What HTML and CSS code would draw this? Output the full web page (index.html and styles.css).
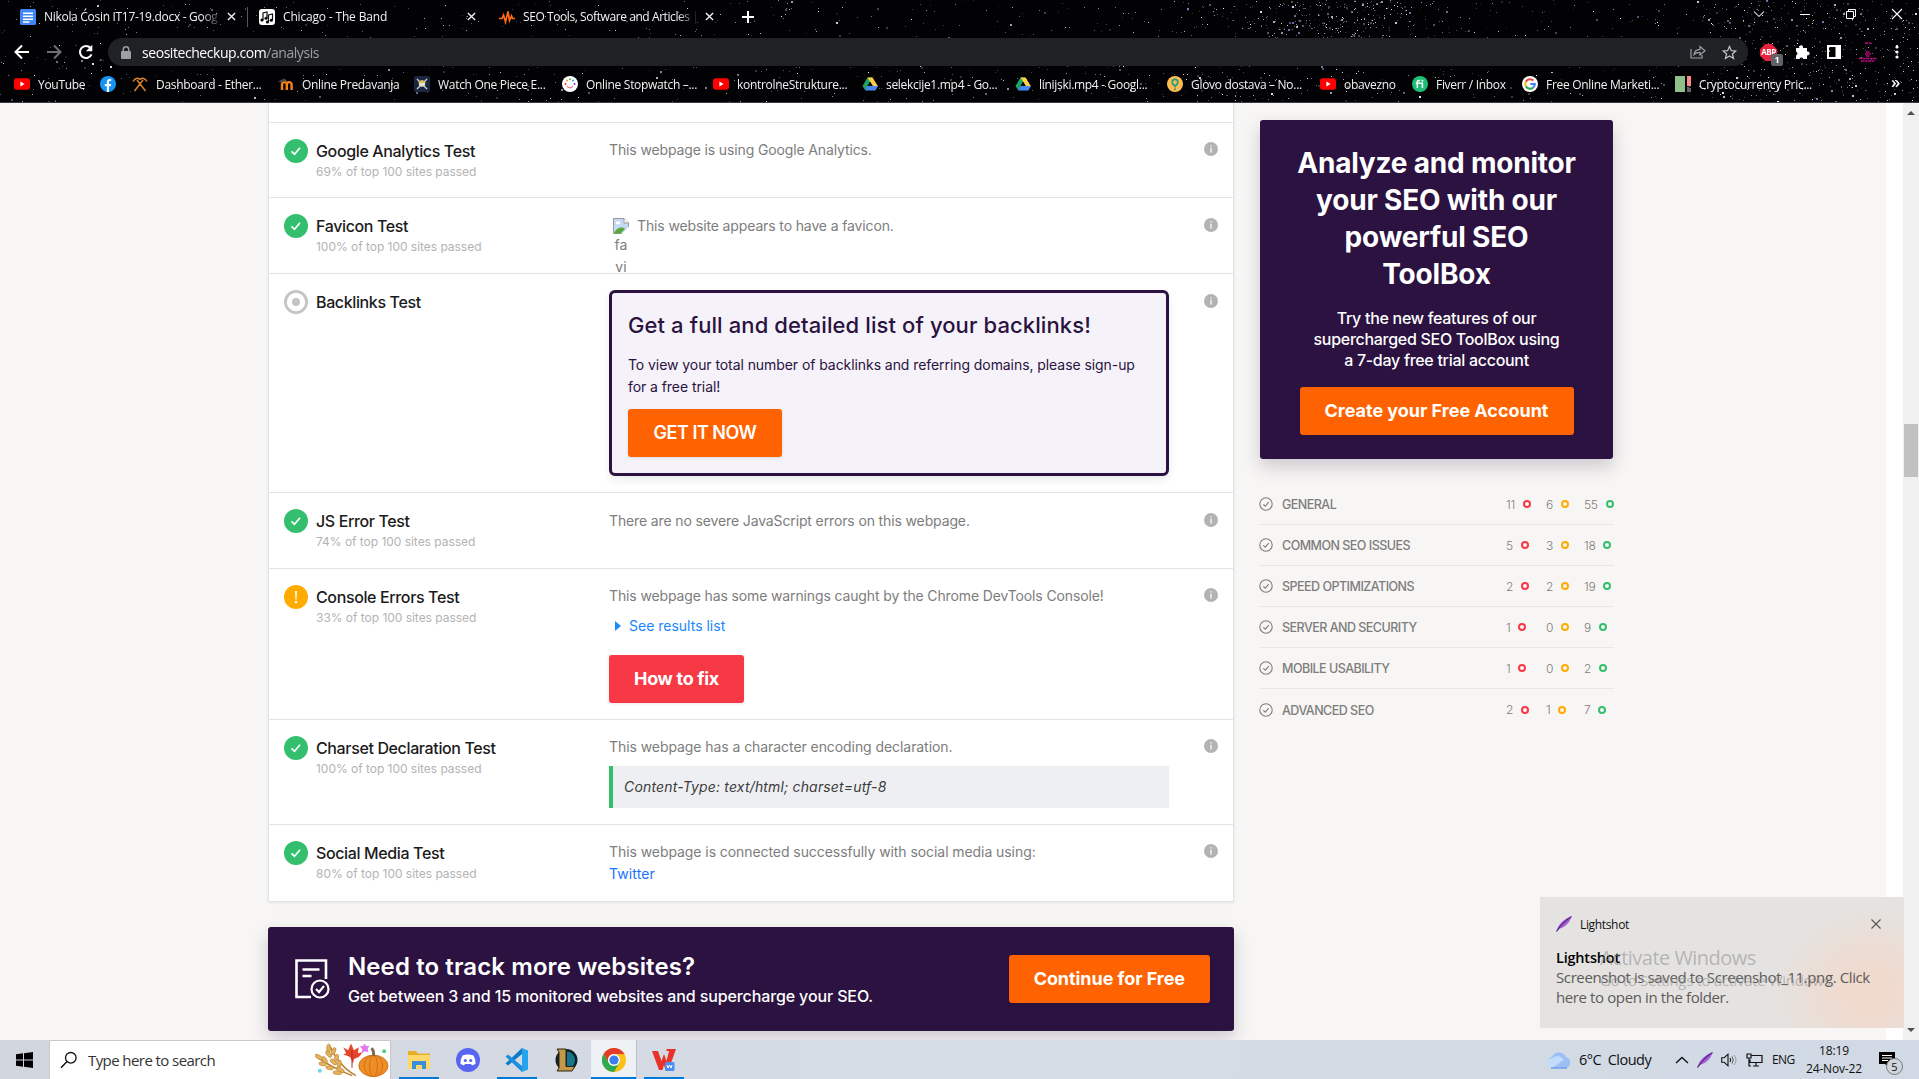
FILE: index.html
```html
<!DOCTYPE html>
<html lang="en">
<head>
<meta charset="utf-8">
<title>SEO Tools, Software and Articles</title>
<link rel="stylesheet" href="styles.css">
</head>
<body>
<svg class="defs" width="0" height="0">
  <symbol id="pass" viewBox="0 0 24 24"><circle cx="12" cy="12" r="12" fill="#34bf6e"/><path d="M7.500 12.300l3 3L16 8.700" fill="none" stroke="#fff" stroke-width="1.700"/></symbol>
  <symbol id="warn" viewBox="0 0 24 24"><circle cx="12" cy="12" r="12" fill="#ffab00"/><path d="M11.100 6h1.800l-.300 8.500h-1.200z" fill="#fff"/><circle cx="12" cy="17" r="1.200" fill="#fff"/></symbol>
  <symbol id="none" viewBox="0 0 24 24"><circle cx="12" cy="12" r="10.600" fill="none" stroke="#c4c4c4" stroke-width="2.800"/><circle cx="12" cy="12" r="4" fill="#c4c4c4"/></symbol>
  <symbol id="info" viewBox="0 0 14 14"><circle cx="7" cy="7" r="7" fill="#b3b3b3"/><path d="M7 5.800v4.600M7 3.200v1.400" stroke="#f4f4f4" stroke-width="1.500"/></symbol>
  <symbol id="tick" viewBox="0 0 14 14"><circle cx="7" cy="7" r="6.200" fill="none" stroke="#7d7d7d" stroke-width="1.100"/><path d="M4.300 7.300l2 1.900 3.400-4" fill="none" stroke="#7d7d7d" stroke-width="1.100"/></symbol>
  <symbol id="yt" viewBox="0 0 16 16"><rect y="2.300" width="16" height="11.400" rx="2.600" fill="#f00"/><path d="M6.400 5.600v4.800L10.600 8z" fill="#fff"/></symbol>
  <symbol id="drive" viewBox="0 0 16 16"><path d="M5.500 1.500h5L8 6 3.200 14.200.500 10z" fill="#1fa463"/><path d="M5.500 1.500h5L16 10.200h-5z" fill="#ffcf48"/><path d="M3 14.500L5.500 10H16l-2.600 4.500z" fill="#4688f4"/><path d="M8 5.800l2.500 4.200h-5z" fill="#0a0a10"/></symbol>
  <symbol id="cross" viewBox="0 0 10 10"><path d="M1 1l8 8M9 1l-8 8" fill="none" stroke="currentColor" stroke-width="1.500"/></symbol>
  <symbol id="feather" viewBox="0 0 16 16"><path d="M.500 15.500C2 9 7 3 15.500.500 14 6 10 11 3 13z" fill="#a45fd0"/><path d="M.500 15.500C4 10 8 5 15.500.500" fill="none" stroke="#5c2391" stroke-width="1.200"/></symbol>
</svg>

<header class="chrome">
  <canvas id="sky" class="sky" width="1919" height="102"></canvas>
  <div class="tabstrip">
    <div class="tab tab-docs">
      <svg class="fav" viewBox="0 0 16 16"><rect width="16" height="16" rx="1.500" fill="#4285f4"/><path d="M3 4.200h10M3 7.200h10M3 10.200h10M3 13h6.500" stroke="#fff" stroke-width="1.500"/></svg>
      <span class="tab-title">Nikola Ćosin IT17-19.docx - Goog</span>
      <svg class="tab-close"><use href="#cross"/></svg>
    </div>
    <div class="tab tab-band">
      <svg class="fav" viewBox="0 0 16 16"><rect width="16" height="16" rx="3" fill="#fff"/><path d="M4 11V4l4-1v6M9.500 12.500V6l4-1v6" fill="none" stroke="#111" stroke-width="1.200"/><circle cx="3" cy="11" r="1.600"/><circle cx="7" cy="9.300" r="1.500"/><circle cx="8.500" cy="13" r="1.600"/><circle cx="12.300" cy="11.300" r="1.500"/></svg>
      <span class="tab-title">Chicago - The Band</span>
      <svg class="tab-close"><use href="#cross"/></svg>
    </div>
    <div class="tab tab-seo">
      <svg class="fav" viewBox="0 0 16 16"><path d="M0 9.500h3l1.500-3.500 2 7L9 2.500l1.500 9 2-4.500 1 2.500H16" fill="none" stroke="#ff6a13" stroke-width="1.700"/></svg>
      <span class="tab-title">SEO Tools, Software and Articles |</span>
      <svg class="tab-close"><use href="#cross"/></svg>
    </div>
    <svg class="new-tab" viewBox="0 0 12 12"><path d="M6 0v12M0 6h12" stroke="#fff" stroke-width="2"/></svg>
    <div class="window-controls">
      <svg width="12" height="12" viewBox="0 0 12 12"><path d="M1 3.500l5 5 5-5" fill="none" stroke="#bbb" stroke-width="1.200"/></svg>
      <svg width="12" height="12" viewBox="0 0 12 12"><path d="M1 6.500h10" stroke="#fff"/></svg>
      <svg width="12" height="12" viewBox="0 0 12 12"><path d="M1.500 3.500h7v7h-7zM3.500 3.500v-2h7v7h-2" fill="none" stroke="#fff"/></svg>
      <svg width="12" height="12" viewBox="0 0 12 12"><path d="M1 1l10 10M11 1L1 11" stroke="#fff" stroke-width="1.100"/></svg>
    </div>
  </div>

  <div class="toolbar">
    <div class="nav">
      <svg width="16" height="16" viewBox="0 0 16 16"><path d="M15 8H2M8 1.500L1.500 8 8 14.500" fill="none" stroke="#fff" stroke-width="2"/></svg>
      <svg width="16" height="16" viewBox="0 0 16 16"><path d="M1 8h13M8 1.500L14.500 8 8 14.500" fill="none" stroke="#6f7074" stroke-width="2"/></svg>
      <svg width="16" height="16" viewBox="0 0 16 16"><path d="M13.500 10.300A6 6 0 1 1 12.500 4" fill="none" stroke="#fff" stroke-width="2.100"/><path d="M14.300.800v6.400H7.900z" fill="#fff"/></svg>
    </div>
    <div class="omnibox">
      <svg width="10" height="13" viewBox="0 0 10 13"><rect y="5" width="10" height="8" rx="1" fill="#9aa0a6"/><path d="M2.300 5V3.500a2.700 2.700 0 0 1 5.400 0V5" fill="none" stroke="#9aa0a6" stroke-width="1.400"/></svg>
      <span class="url">seositecheckup.com<span class="path">/analysis</span></span>
      <svg class="share" width="16" height="14" viewBox="0 0 16 14"><path d="M1 4v9h11v-3M4 9.500C4.500 6 6.500 4.500 10 4.300V1.500l5 4.300-5 4.200V7.300C7 7.300 5.500 8 4 9.500z" fill="none" stroke="#9aa0a6" stroke-width="1.200"/></svg>
      <svg width="15" height="15" viewBox="0 0 16 16"><path d="M8 1.500l2 4.500 4.800.400-3.700 3.200 1.200 4.800L8 11.800l-4.300 2.600 1.200-4.800L1.200 6.400 6 6z" fill="none" stroke="#c4c7c9" stroke-width="1.300"/></svg>
    </div>
    <div class="extensions">
      <div class="abp"><svg width="17" height="17" viewBox="0 0 16 16"><path d="M5 0h6l5 5v6l-5 5H5l-5-5V5z" fill="#e9233f"/></svg><span class="abp-text">ABP</span><span class="abp-count">1</span></div>
      <svg width="16" height="16" viewBox="0 0 16 16"><path d="M2 4h3.300a2 2 0 1 1 3.700 0H13v3.500a2 2 0 1 1 0 3.800V15H9.300a2 2 0 0 0-3.800 0H2v-3.600a2 2 0 0 0 0-3.800z" fill="#fff"/></svg>
      <svg width="14" height="14" viewBox="0 0 14 14"><path d="M0 0h14v14H0zM2 2v10h6.500V2z" fill="#fff" fill-rule="evenodd"/></svg>
      <svg width="20" height="20" viewBox="0 0 20 20"><path d="M7 1h6M8 10h4M7 12h6M8 14h4M1 16.500h18M3 19h14" stroke="#b4087a" stroke-width="1.400" stroke-dasharray="3 .500"/></svg>
      <svg width="4" height="14" viewBox="0 0 4 14"><circle cx="2" cy="2" r="1.600" fill="#fff"/><circle cx="2" cy="7" r="1.600" fill="#fff"/><circle cx="2" cy="12" r="1.600" fill="#fff"/></svg>
    </div>
  </div>

  <nav class="bookmarks">
    <a><svg><use href="#yt"/></svg>YouTube</a>
    <a><svg viewBox="0 0 16 16"><circle cx="8" cy="8" r="8" fill="#1594f6"/><path d="M6.800 16V10.200H4.800V8h2V6.200C6.800 4 8 3 9.700 3l1.500.100v2h-1C9.200 5.100 9 5.600 9 6.300V8h2.200l-.400 2.200H9V16z" fill="#fff"/></svg></a>
    <a><svg viewBox="0 0 16 16"><path d="M2.500 15L11 4M13.500 15L5 4M1 5.500C3 2 5.500 1.500 8 3.500M15 5.500C13 2 10.500 1.500 8 3.500" fill="none" stroke="#d9822b" stroke-width="1.500"/></svg>Dashboard - Ether...</a>
    <a><svg viewBox="0 0 16 16"><path d="M3 14V8.500a2.400 2.400 0 0 1 4.800 0V14m0-5.500a2.400 2.400 0 0 1 4.800 0V14" transform="translate(1)" fill="none" stroke="#f98012" stroke-width="2.400"/><path d="M0 5.500l6-3 3 2-6 2z" fill="#4a4a4a"/></svg>Online Predavanja</a>
    <a><svg viewBox="0 0 16 16"><rect width="16" height="16" rx="2" fill="#1b2740"/><path d="M3 3l10 10M13 3L3 13" stroke="#cfd2d8" stroke-width="1.300"/><circle cx="8" cy="7.500" r="3.200" fill="#e9e3cf"/><path d="M4.500 6h7" stroke="#d8b53a" stroke-width="1.600"/></svg>Watch One Piece E...</a>
    <a><svg viewBox="0 0 16 16"><circle cx="8" cy="8" r="8" fill="#fff"/><circle cx="3.500" cy="8" r="1" fill="#e33"/><circle cx="5" cy="4.500" r="1" fill="#f90"/><circle cx="8" cy="3.200" r="1" fill="#4b4"/><circle cx="11" cy="4.500" r="1" fill="#29c"/><circle cx="12.500" cy="8" r="1" fill="#63c"/><path d="M5 10c1.500 2.500 4.500 2.500 6 0" fill="none" stroke="#e67" stroke-width="1.200"/></svg>Online Stopwatch –...</a>
    <a><svg><use href="#yt"/></svg>kontrolneStrukture...</a>
    <a><svg><use href="#drive"/></svg>selekcije1.mp4 - Go...</a>
    <a><svg><use href="#drive"/></svg>linijski.mp4 - Googl...</a>
    <a><svg viewBox="0 0 16 16"><circle cx="8" cy="8" r="8" fill="#fdbb52"/><path d="M8 11.500V9.800C6 8.800 5.200 7.600 5.200 6.200a2.800 2.800 0 0 1 5.600 0C10.800 7.600 10 8.800 8 9.800" fill="none" stroke="#23a07c" stroke-width="1.700"/><circle cx="8" cy="13.200" r="1" fill="#23a07c"/></svg>Glovo dostava – No...</a>
    <a><svg><use href="#yt"/></svg>obavezno</a>
    <a><svg viewBox="0 0 16 16"><circle cx="8" cy="8" r="8" fill="#1dbf73"/><path d="M5.300 12V6.200C5.300 4.800 6.200 4.300 8 4.500M3.800 7.300h6.600V12" fill="none" stroke="#fff" stroke-width="1.500"/><circle cx="10.400" cy="4.700" r="1" fill="#fff"/></svg>Fiverr / Inbox</a>
    <a><svg viewBox="0 0 16 16"><circle cx="8" cy="8" r="8" fill="#fff"/><g fill="none" stroke-width="2.100"><path d="M11.400 4.600A4.800 4.800 0 0 0 3.900 5.600" stroke="#ea4335"/><path d="M3.900 5.600a4.800 4.800 0 0 0 0 4.800" stroke="#fbbc05"/><path d="M3.900 10.400a4.800 4.800 0 0 0 7.200 1.200" stroke="#34a853"/><path d="M11.100 11.600A4.800 4.800 0 0 0 12.800 8H8.200" stroke="#4285f4"/></g></svg>Free Online Marketi...</a>
    <a><svg viewBox="0 0 16 16"><path d="M0 0h10v16H0z" fill="#8fc08a"/><path d="M12 0h4v10h-4z" fill="#fb8a86"/><path d="M12 12h4v4h-4z" fill="#666"/></svg>Cryptocurrency Pric...</a>
    <span class="more">»</span>
  </nav>
</header>

<main class="viewport">
  <div class="page">
    <div class="primary">
      <section class="tests">
        <div class="test r75">
          <svg class="status"><use href="#pass"/></svg>
          <div><h3>Google Analytics Test</h3><p class="rate">69% of top 100 sites passed</p></div>
          <div class="desc">This webpage is using Google Analytics.</div>
          <svg class="info"><use href="#info"/></svg>
        </div>
        <div class="test r76 favicon-row">
          <svg class="status"><use href="#pass"/></svg>
          <div><h3>Favicon Test</h3><p class="rate">100% of top 100 sites passed</p></div>
          <div class="desc favicon">
            <div class="broken"><svg width="16" height="16" viewBox="0 0 16 16"><path d="M.500.500h10.500L15.500 5v10.500H.500z" fill="#c6d9f7" stroke="#9a9a9a"/><path d="M11 .500V5h4.500" fill="#fff" stroke="#9a9a9a"/><path d="M1 15.500C3 10 9 8 12 11l-4.500 4.500z" fill="#58a83b"/><ellipse cx="5" cy="5" rx="2.500" ry="1.400" fill="#fff"/><path d="M16 8.500L8.500 16H16z" fill="#fff"/></svg><span>fa</span><span>vi</span></div>
            <span>This website appears to have a favicon.</span>
          </div>
          <svg class="info"><use href="#info"/></svg>
        </div>
        <div class="test r219">
          <svg class="status"><use href="#none"/></svg>
          <div><h3>Backlinks Test</h3></div>
          <div class="promo">
            <h2>Get a full and detailed list of your backlinks!</h2>
            <p>To view your total number of backlinks and referring domains, please sign-up<br>for a free trial!</p>
            <a class="btn orange get-now">GET IT NOW</a>
          </div>
          <svg class="info"><use href="#info"/></svg>
        </div>
        <div class="test r76">
          <svg class="status"><use href="#pass"/></svg>
          <div><h3>JS Error Test</h3><p class="rate">74% of top 100 sites passed</p></div>
          <div class="desc">There are no severe JavaScript errors on this webpage.</div>
          <svg class="info"><use href="#info"/></svg>
        </div>
        <div class="test r151">
          <svg class="status"><use href="#warn"/></svg>
          <div><h3>Console Errors Test</h3><p class="rate">33% of top 100 sites passed</p></div>
          <div class="desc">This webpage has some warnings caught by the Chrome DevTools Console!
            <div class="results">See results list</div>
            <a class="btn red">How to fix</a>
          </div>
          <svg class="info"><use href="#info"/></svg>
        </div>
        <div class="test r105">
          <svg class="status"><use href="#pass"/></svg>
          <div><h3>Charset Declaration Test</h3><p class="rate">100% of top 100 sites passed</p></div>
          <div class="desc">This webpage has a character encoding declaration.
            <div class="code">Content-Type: text/html; charset=utf-8</div>
          </div>
          <svg class="info"><use href="#info"/></svg>
        </div>
        <div class="test r77">
          <svg class="status"><use href="#pass"/></svg>
          <div><h3>Social Media Test</h3><p class="rate">80% of top 100 sites passed</p></div>
          <div class="desc">This webpage is connected successfully with social media using:<br><a class="link">Twitter</a></div>
          <svg class="info"><use href="#info"/></svg>
        </div>
      </section>

      <section class="banner">
        <svg width="35" height="40" viewBox="0 0 35 40"><path d="M16 38H1.500V1.500H31V20" fill="none" stroke="#fff" stroke-width="2.600"/><path d="M7.500 10.500h17M7.500 17h9" stroke="#fff" stroke-width="2.600"/><circle cx="25" cy="30" r="8.500" fill="none" stroke="#fff" stroke-width="2.200"/><path d="M21 30l3 3 5-6" fill="none" stroke="#fff" stroke-width="2.200"/></svg>
        <div class="banner-text"><h2>Need to track more websites?</h2><p>Get between 3 and 15 monitored websites and supercharge your SEO.</p></div>
        <a class="btn orange">Continue for Free</a>
      </section>
    </div>

    <aside class="side">
      <section class="toolbox">
        <h2>Analyze and monitor<br>your SEO with our<br>powerful SEO<br>ToolBox</h2>
        <p>Try the new features of our<br>supercharged SEO ToolBox using<br>a 7-day free trial account</p>
        <a class="btn orange create">Create your Free Account</a>
      </section>
      <ul class="summary">
        <li><svg><use href="#tick"/></svg><b>GENERAL</b><span class="bad">11</span><span class="mid">6</span><span class="good">55</span></li>
        <li><svg><use href="#tick"/></svg><b>COMMON SEO ISSUES</b><span class="bad">5</span><span class="mid">3</span><span class="good">18</span></li>
        <li><svg><use href="#tick"/></svg><b>SPEED OPTIMIZATIONS</b><span class="bad">2</span><span class="mid">2</span><span class="good">19</span></li>
        <li><svg><use href="#tick"/></svg><b>SERVER AND SECURITY</b><span class="bad">1</span><span class="mid">0</span><span class="good">9</span></li>
        <li><svg><use href="#tick"/></svg><b>MOBILE USABILITY</b><span class="bad">1</span><span class="mid">0</span><span class="good">2</span></li>
        <li><svg><use href="#tick"/></svg><b>ADVANCED SEO</b><span class="bad">2</span><span class="mid">1</span><span class="good">7</span></li>
      </ul>
    </aside>
  </div>
  <div class="scrollbar">
    <svg width="8" height="5" viewBox="0 0 8 5"><path d="M0 5l4-4 4 4z" fill="#505050"/></svg>
    <div class="thumb"></div>
    <svg width="8" height="5" viewBox="0 0 8 5"><path d="M0 0l4 4 4-4z" fill="#505050"/></svg>
  </div>
</main>

<div class="toast">
  <div class="toast-head"><svg width="16" height="16"><use href="#feather"/></svg><span>Lightshot</span><svg class="toast-close" width="10" height="10" viewBox="0 0 10 10"><path d="M.500.500l9 9M9.500.500l-9 9" stroke="#555" stroke-width="1.100"/></svg></div>
  <div class="toast-title">Lightshot</div>
  <div class="toast-body">Screenshot is saved to Screenshot_11.png. Click<br>here to open in the folder.</div>
</div>
<div class="watermark"><div class="wm-title">Activate Windows</div><div class="wm-sub">Go to Settings to activate Windows.</div></div>

<footer class="taskbar">
  <div class="start"><svg width="17" height="16" viewBox="0 0 17 16"><path d="M0 2.300l7-1v6.300H0zM8 1.200l9-1.200v7.600H8zM0 8.500h7v6.300l-7-1zM8 8.500h9V16l-9-1.200z"/></svg></div>
  <div class="search">
    <svg width="18" height="18" viewBox="0 0 18 18"><circle cx="10.800" cy="6.800" r="5.300" fill="none" stroke="#111" stroke-width="1.300"/><path d="M7 10.500L1 16.800" stroke="#111" stroke-width="1.400"/></svg>
    <span>Type here to search</span>
    <svg class="harvest" width="74" height="36" viewBox="0 0 76 36"><g stroke="#b98232" fill="none" stroke-width="1.500"><path d="M42 34Q25 25 15 3M38 34Q18 26 2 15"/></g><g fill="#e2b35c" stroke="#b98232" stroke-width=".600"><ellipse cx="14" cy="6" rx="2" ry="4.500"/><ellipse cx="19" cy="9" rx="2" ry="4" transform="rotate(25 19 9)"/><ellipse cx="14" cy="12" rx="2" ry="4" transform="rotate(-40 14 12)"/><ellipse cx="22" cy="16" rx="2" ry="4" transform="rotate(20 22 16)"/><ellipse cx="19" cy="20" rx="2" ry="4" transform="rotate(-50 19 20)"/><ellipse cx="25" cy="22" rx="2" ry="4" transform="rotate(10 25 22)"/><ellipse cx="4" cy="15" rx="2" ry="4.500" transform="rotate(-60 4 15)"/><ellipse cx="10" cy="18" rx="2" ry="4" transform="rotate(-30 10 18)"/><ellipse cx="8" cy="22" rx="2" ry="4" transform="rotate(-80 8 22)"/><ellipse cx="15" cy="26" rx="2" ry="4" transform="rotate(-80 15 26)"/><ellipse cx="23" cy="31" rx="2" ry="4.500" transform="rotate(-85 23 31)"/><ellipse cx="26" cy="28" rx="2" ry="4.500" transform="rotate(-60 26 28)"/></g><path d="M38 19l-2-4-7-3 3-1-3-6 5 3 3-7 3 7 5-3-1 6 5-1-4 5-5 2-1 5M39 17v8" fill="#e4452b"/><path d="M38 8v18" stroke="#b02c1c"/><g fill="#ef8e27" stroke="#c76a12" stroke-width=".800"><ellipse cx="60" cy="24" rx="15" ry="11"/><ellipse cx="60" cy="24" rx="9.500" ry="11"/><ellipse cx="60" cy="24" rx="4" ry="11"/></g><path d="M60 14Q61 9 58 6" stroke="#7b6a51" stroke-width="3" fill="none"/><path d="M51 1l1.500 2.500L56 4l-2 2.500 1 3.500-4-1-3 2 .500-4L46 4l3.500-.500z" fill="#e07af0"/><circle cx="71" cy="9" r="2" fill="#4cd07d"/><circle cx="5" cy="29" r="2" fill="#65d6ee"/></svg>
  </div>
  <div class="apps">
    <div class="app run"><svg viewBox="0 0 24 24"><path d="M1 3h8l2 2.500h12V21H1z" fill="#e8ae2b"/><path d="M1 7h22v14H1z" fill="#ffd868"/><path d="M5 21v-8h14v8h-4v-4H9v4z" fill="#3b8ed8"/></svg></div>
    <div class="app"><svg viewBox="0 0 24 24"><circle cx="12" cy="12" r="12" fill="#5865f2"/><path d="M6.500 7.500Q12 5.500 17.500 7.500 20 12 19.500 16L16 17.500l-1-1.500H9l-1 1.500L4.500 16Q4 12 6.500 7.500z" fill="#fff"/><circle cx="9.300" cy="12.500" r="1.600" fill="#5865f2"/><circle cx="14.700" cy="12.500" r="1.600" fill="#5865f2"/></svg></div>
    <div class="app run"><svg viewBox="0 0 24 24"><path d="M17 0l6 2.500v19L17 24z" fill="#24a3ee"/><path d="M17 0v6L3 17.500.500 15.500z" fill="#0c7cc9"/><path d="M17 24v-6L3 6.500.500 8.500z" fill="#1a8fdc"/></svg></div>
    <div class="app"><svg viewBox="0 0 24 24"><circle cx="12.500" cy="12" r="11" fill="#0b2229"/><path d="M13 3.500a8.500 8.500 0 0 1 8 8.500c0 2.500-1 5-3 6.500h-5z" fill="#17778a"/><path d="M3 1h9v17.500h9L18 23H3l2-3V4z" fill="#c4984b" stroke="#2c2413"/></svg></div>
    <div class="app run active"><svg viewBox="0 0 24 24"><circle cx="12" cy="12" r="12" fill="#fbc116"/><path d="M1.600 6A12 12 0 0 1 22.400 6H12a6 6 0 0 0-5.200 9z" fill="#e33b2e"/><path d="M1.600 6A12 12 0 0 0 12 24l5.200-9H6.800z" fill="#2da94f"/><circle cx="12" cy="12" r="6" fill="#fff"/><circle cx="12" cy="12" r="4.600" fill="#3b7ded"/></svg></div>
    <div class="app run wps"><svg viewBox="0 0 24 24"><path d="M0 3h6l3.500 10L12 6l2.500 7L17 3h-3l1-2h9l-7.500 21h-3L12 17l-1.500 5H7z" fill="#e8322a"/><rect x="13" y="14" width="9.500" height="9" rx="1.500" fill="#4d8ff0"/><path d="M15 17l1 3 1.500-3 1.500 3 1-3" fill="none" stroke="#fff" stroke-width="1"/></svg></div>
  </div>
  <div class="weather"><svg width="26" height="18" viewBox="0 0 26 18"><path d="M7 17a6 6 0 0 1-1-11.500A8 8 0 0 1 20 6a5.700 5.700 0 0 1 0 11z" fill="#9cc0f5"/><path d="M6 17a5 5 0 0 1 .500-10 7 7 0 0 1 11 2z" fill="#c5dbfb"/><path d="M5 17h16" stroke="#6f9ee8" stroke-width="1.500"/></svg><span>6°C&nbsp;&nbsp;Cloudy</span></div>
  <div class="tray">
    <svg width="14" height="8" viewBox="0 0 14 8"><path d="M1 7l6-5.500L13 7" fill="none" stroke="#111" stroke-width="1.400"/></svg>
    <svg width="16" height="16"><use href="#feather"/></svg>
    <svg width="17" height="14" viewBox="0 0 17 14"><path d="M.700 4.700h2.500L7 1.200v11.600L3.200 9.300H.700z" fill="none" stroke="#111" stroke-width="1.100"/><path d="M9 5q1.200 2 0 4" fill="none" stroke="#111" stroke-width="1.100"/><path d="M11 3.500q2.500 3.500 0 7" fill="none" stroke="#555"/><path d="M13 2q4 5 0 10" fill="none" stroke="#999"/></svg>
    <svg width="17" height="14" viewBox="0 0 17 14"><path d="M5.500 2.500h10.500v7H4v-3M1 1h4v4H1zM3 5v8h2M10 9.500V13M7 13h6" fill="none" stroke="#111" stroke-width="1.200"/></svg>
    <span class="lang">ENG</span>
  </div>
  <div class="clock"><span>18:19</span><span>24-Nov-22</span></div>
  <div class="center"><svg width="16" height="16" viewBox="0 0 16 16"><path d="M0 0h16v12h-6v4l-4-4H0z"/><path d="M3 3.500h10M3 6h10M3 8.500h6" stroke="#fff" stroke-width="1.200"/></svg><span class="count">5</span></div>
</footer>
<script src="sky.js"></script>
</body>
</html>
```
FILE: styles.css
```css
*, *::before, *::after { box-sizing: border-box; }
body { margin: 0; width: 1919px; height: 1079px; overflow: hidden; display: flex; flex-direction: column; font-family: Inter, sans-serif; background: #f7f6f4; position: relative; }
h2, h3, p, ul { margin: 0; padding: 0; }
svg { display: block; flex: none; }
.defs { position: absolute; }

/* browser frame */
.chrome { position: relative; height: 103px; background: #020205; border-bottom: 1px solid #3b3c3f; font: 12px "Open Sans", sans-serif; letter-spacing: -.3px; color: #f2f2f2; flex: none; }
.sky { position: absolute; left: 0; top: 0; }
.tabstrip, .toolbar, .bookmarks { position: relative; display: flex; align-items: center; }
.tabstrip { height: 38px; padding: 0 16px 10px 20px; }
.tab { display: flex; align-items: center; height: 20px; margin-top: 5px; }
.fav { width: 16px; height: 16px; margin-right: 8px; }
.tab-title { white-space: nowrap; overflow: hidden; width: 179px; margin-right: 4px; }
.tab-close { width: 9px; height: 9px; }
.tab-docs { width: 228px; border-right: 1px solid #55565a; }
.tab-docs .tab-title, .tab-seo .tab-title { -webkit-mask-image: linear-gradient(90deg, #000 88%, transparent); mask-image: linear-gradient(90deg, #000 88%, transparent); }
.tab-band { width: 240px; padding-left: 11px; letter-spacing: -.17px; }
.tab-band .tab-title { width: 176px; margin-right: 8px; }
.tab-seo { padding-left: 11px; width: 230px; letter-spacing: -.42px; }
.tab-seo .tab-title { width: 176px; margin-right: 6px; }
.new-tab { width: 12px; height: 12px; margin: 5px 0 0 24px; }
.window-controls { display: flex; gap: 34px; margin-left: auto; }
.toolbar { height: 28px; }
.nav { display: flex; gap: 16px; width: 108px; padding-left: 14px; }
.omnibox { width: 1640px; height: 28px; border-radius: 14px; background: #202124; display: flex; align-items: center; padding: 0 11px 0 13px; }
.url { font-size: 14px; letter-spacing: -.44px; margin-left: 11px; color: #fff; }
.path { color: #9aa0a6; }
.share { margin-left: auto; margin-right: 16px; }
.extensions { display: flex; align-items: center; gap: 17px; padding-left: 12px; }
.abp { position: relative; }
.abp-text { position: absolute; left: 0; top: 3px; width: 17px; text-align: center; font: 700 8px/10px "Open Sans", sans-serif; letter-spacing: -.4px; color: #fff; }
.abp-count { position: absolute; left: 11px; top: 10px; width: 12px; height: 12px; border-radius: 2px; background: #5f6368; font: 700 9px/12px "Open Sans", sans-serif; text-align: center; color: #fff; }
.bookmarks { height: 36px; padding-left: 14px; display: grid; grid-template-columns: 86px 32px 146px 136px 148px 151px 149px 153px 152px 153px 92px 110px 153px 216px 1fr; }
.bookmarks a { display: flex; align-items: center; gap: 8px; white-space: nowrap; }
.bookmarks svg { width: 16px; height: 16px; }
.more { font-size: 17px; line-height: 18px; font-weight: 600; padding-bottom: 4px; }

/* page viewport */
.viewport { height: 937px; flex: none; display: flex; overflow: hidden; background: #fff; }
.page { width: 1886px; background: #f7f6f4; padding-left: 268px; display: flex; gap: 26px; }
.primary { width: 966px; }
.scrollbar { margin-left: auto; width: 16px; background: #f0f0f0; display: flex; flex-direction: column; align-items: center; justify-content: space-between; padding: 7px 0; }
.thumb { width: 14px; height: 53px; background: #c1c1c1; margin-bottom: 242px; }

.tests { background: #fff; border: 1px solid #dfe4e6; border-top: 0; padding-top: 19px; box-shadow: 0 1px 3px rgba(0, 0, 0, .07); }
.test { display: grid; grid-template-columns: 32px 293px 560px 1fr; align-items: start; border-top: 1px solid #dfe4e6; padding: 16px 15px 0 15px; overflow: hidden; }
.r75 { height: 75px; }
.r76 { height: 76px; }
.r77 { height: 77px; }
.r105 { height: 105px; }
.r151 { height: 151px; }
.r219 { height: 219px; }
.status { width: 24px; height: 24px; }
.info { width: 14px; height: 14px; margin-top: 3px; justify-self: end; }
.r219 .info, .r76 .info { margin-top: 4px; }
.test h3 { font-size: 16px; line-height: 24px; font-weight: 500; letter-spacing: -.37px; color: #1b1b1b; }
.rate { font-size: 12px; line-height: 18px; letter-spacing: -.03px; color: #b3b3b3; }
.desc { font-size: 14px; line-height: 22px; letter-spacing: -.13px; color: #7d7d7d; }
.r76 .desc { padding-top: 1px; }
.r77 .desc, .r105 .desc { letter-spacing: -.07px; }
.favicon { display: flex; gap: 8px; }
.broken { width: 16px; margin-left: 4px; padding-top: 3px; display: flex; flex-direction: column; align-items: center; line-height: 22px; letter-spacing: 0; }
.promo { height: 186px; border: 3px solid #2b1240; border-radius: 6px; background: #f5f2f9; padding: 19px 16px 0; color: #2b1240; box-shadow: 0 4px 8px rgba(0, 0, 0, .08); }
.promo h2 { font-size: 22px; line-height: 26px; font-weight: 500; letter-spacing: .1px; margin-bottom: 16px; }
.promo p { font-size: 14px; line-height: 22px; letter-spacing: -.07px; margin-bottom: 11px; white-space: nowrap; }
.btn { display: inline-flex; align-items: center; justify-content: center; height: 48px; padding: 0 25px; border-radius: 3px; color: #fff; font-size: 18px; line-height: 24px; font-weight: 700; white-space: nowrap; letter-spacing: -.06px; box-shadow: 0 1px 3px rgba(0, 0, 0, .1); }
.orange { background: #ff6200; }
.red { background: #f73946; letter-spacing: -.32px; width: 135px; display: flex; margin-top: 18px; }
.get-now { display: flex; width: 154px; font-weight: 600; letter-spacing: -.48px; }
.create { letter-spacing: -.02px; width: 274px; }
.results { margin-top: 8px; color: #1a86ff; display: flex; align-items: center; gap: 8px; letter-spacing: 0; padding-left: 6px; }
.results::before { content: ""; border-left: 6px solid #1a8cff; border-top: 5px solid transparent; border-bottom: 5px solid transparent; }
.link { color: #1a73ff; letter-spacing: .1px; }
.desc .code { margin-top: 8px; height: 42px; background: #eeeff3; border-left: 4px solid #34bf6e; padding-left: 11px; line-height: 42px; font-style: italic; color: #3c3c3c; letter-spacing: .16px; }

.banner { height: 104px; margin-top: 25px; background: #2b1240; border-radius: 3px; box-shadow: 0 8px 18px rgba(43, 18, 64, .2); display: flex; align-items: center; padding: 0 24px 0 27px; color: #fff; }
.banner-text { margin: 2px auto 0 18px; }
.banner h2 { font-size: 24px; line-height: 30px; font-weight: 600; letter-spacing: .1px; margin-bottom: 2px; }
.banner p { font-size: 16px; line-height: 24px; font-weight: 500; letter-spacing: -.12px; }

/* sidebar */
.side { width: 353px; padding-top: 17px; }
.toolbox { height: 339px; background: #2b1240; border-radius: 3px; box-shadow: 0 8px 18px rgba(43, 18, 64, .2); color: #fff; text-align: center; padding-top: 25px; }
.toolbox h2 { font-size: 28px; line-height: 37px; font-weight: 700; letter-spacing: -.2px; margin-bottom: 15px; }
.toolbox p { font-size: 16px; line-height: 21px; font-weight: 500; letter-spacing: -.29px; margin-bottom: 16px; }
.summary { list-style: none; padding-top: 25px; margin: 0 -1px; }
.summary li { height: 41px; display: grid; grid-template-columns: 23px 224px 40px 38px 1fr; align-items: center; border-bottom: 1px solid #e8e7e5; font-size: 12.500px; color: #7d7d7d; }
.summary li:last-child { border: 0; }
.summary svg { width: 14px; height: 14px; }
.summary b { font-weight: 500; letter-spacing: -.52px; padding-top: 1px; }
.summary span { display: flex; align-items: center; gap: 8px; font-weight: 300; font-size: 12px; letter-spacing: -.3px; }
.summary span::after { content: ""; width: 8px; height: 8px; border-radius: 50%; border: 2.500px solid; }
.summary .bad::after { border-color: #f73946; }
.summary .mid::after { border-color: #ffab00; }
.summary .good::after { border-color: #34bf6e; }

/* notification over the desktop */
.toast { position: absolute; left: 1540px; top: 897px; width: 364px; height: 131px; padding: 19px 0 0 16px; background: radial-gradient(ellipse 100px 90px at 330px 95px, #f0dace 25%, rgba(240, 218, 206, 0) 100%), #e4e3e1; font-family: "Open Sans", sans-serif; }
.toast-head { display: flex; align-items: center; height: 16px; font-size: 12px; letter-spacing: -.34px; color: #111; padding-right: 23px; }
.toast-head span { margin-left: 8px; }
.toast-close { margin-left: auto; }
.toast-title { margin-top: 17px; font-size: 14.500px; line-height: 18px; font-weight: 600; letter-spacing: -.2px; color: #000; }
.toast-body { font-size: 15px; line-height: 20px; letter-spacing: -.39px; color: #5c5b5a; }
.watermark { position: absolute; left: 1600px; top: 944px; font-family: "Open Sans", sans-serif; color: rgba(140, 140, 140, .55); white-space: nowrap; }
.wm-title { font-size: 20px; line-height: 28px; letter-spacing: -.52px; }
.wm-sub { font-size: 15px; line-height: 17px; letter-spacing: -.34px; }

/* taskbar */
.taskbar { height: 39px; flex: none; display: flex; align-items: center; background: linear-gradient(90deg, #d0d5de, #d7dde6 50%, #d0d9e4); font-family: "Open Sans", sans-serif; color: #111; }
.start { width: 49px; padding-left: 16px; }
.search { width: 342px; height: 39px; background: #fff; border: 1px solid #c8c8c8; border-bottom: 0; display: flex; align-items: center; padding: 0 1px 0 10px; font-size: 15px; letter-spacing: -.58px; color: #333; }
.search span { margin-left: 10px; }
.harvest { margin-left: auto; }
.apps { display: flex; margin-left: 3px; }
.app { width: 49px; height: 39px; display: flex; align-items: center; justify-content: center; position: relative; }
.app svg { width: 24px; height: 24px; }
.run::after { content: ""; position: absolute; left: 5px; right: 4px; bottom: 0; height: 2px; background: #0078d7; }
.active { background: #eef2f6; width: 46px; margin-left: 1px; border-right: 1px solid #b9c0c9; }
.active::after { left: 0; right: 0; }
.wps { width: 52px; padding-left: 2px; }
.wps::after { left: 7px; right: 5px; }
.weather { margin-left: auto; width: 128px; display: flex; align-items: center; gap: 7px; font-size: 14.500px; letter-spacing: -.5px; }
.tray { display: flex; align-items: center; gap: 8px; font-size: 12px; width: 129px; padding-left: 1px; }
.lang { letter-spacing: -.6px; margin-left: 1px; }
.clock { width: 62px; display: flex; flex-direction: column; align-items: center; font-size: 12px; line-height: 18px; letter-spacing: -.16px; }
.center { position: relative; width: 54px; height: 39px; padding: 12px 0 0 14px; }
.count { position: absolute; left: 21px; top: 18px; width: 17px; height: 17px; border-radius: 50%; border: 1px solid #777; background: #d0d6de; font-size: 11px; line-height: 15px; text-align: center; }
```
FILE: sky.js
```js
// Starfield behind the tab strip and bookmarks bar.
const ctx = document.getElementById("sky").getContext("2d");
let seed = 7;
const rnd = () => (seed = (seed * 16807) % 2147483647) / 2147483647;
const tones = ["255,255,255", "205,225,250", "120,135,190", "90,95,120"];
const star = (x, y) => {
  ctx.fillStyle = `rgba(${tones[Math.floor(rnd() * 4)]},${0.25 + rnd() * 0.7})`;
  const s = rnd() > 0.9 ? 2 : 1;
  ctx.fillRect(Math.round(x), Math.round(y), s, s);
};
for (let i = 0; i < 1300; i++) star(rnd() * 1919, rnd() * 102);
// denser bands of the galaxy
for (let i = 0; i < 260; i++) star(1345 + (rnd() + rnd() - 1) * 110, rnd() * 40);
for (let i = 0; i < 420; i++) star(1700 + rnd() * 219, rnd() * 102);
for (let i = 0; i < 160; i++) star(1180 + rnd() * 140, rnd() * 102);
```
